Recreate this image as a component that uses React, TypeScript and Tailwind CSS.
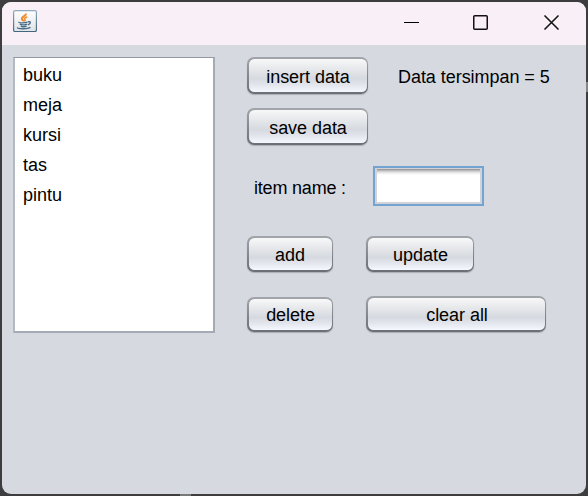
import type { ReactNode } from "react";

const items = ["buku", "meja", "kursi", "tas", "pintu"];

function Button({
  className,
  labelClass = "pt-px pl-px",
  children,
}: {
  className: string;
  labelClass?: string;
  children: ReactNode;
}) {
  return (
    <button
      className={`rounded-[7px] bg-linear-to-b from-[#a2a5aa] to-[#6b6e75] p-[1.5px] pb-[2px] shadow-[0_1px_1px_rgba(90,95,105,0.35)] ${className}`}
    >
      <span
        className={`flex h-full w-full items-center justify-center rounded-[5.5px] bg-[linear-gradient(to_bottom,#f8f8f9_0%,#e6e8eb_30%,#d6d9df_60%,#e2e5ec_78%,#f6f8ff_100%)] tracking-[-0.05px] whitespace-nowrap ${labelClass}`}
      >
        {children}
      </span>
    </button>
  );
}

function JavaIcon() {
  return (
    <svg width="24" height="24" viewBox="0 0 24 24" fill="none">
      <defs>
        <linearGradient id="tile" x1="0" y1="0" x2="0" y2="1">
          <stop offset="0" stopColor="#ffffff" />
          <stop offset="1" stopColor="#dfe3e6" />
        </linearGradient>
        <linearGradient id="edge" x1="0" y1="0" x2="0" y2="1">
          <stop offset="0" stopColor="#8fabbd" />
          <stop offset="1" stopColor="#45667f" />
        </linearGradient>
      </defs>
      <rect x="0.6" y="2.6" width="22.8" height="21" rx="1.5" fill="url(#tile)" stroke="url(#edge)" strokeWidth="1.2" />
      <path d="M12.9 5.5C13.6 8 8.2 8.6 8.8 10.9C9.1 12 10.8 12.4 11 13.4" stroke="#f08a28" strokeWidth="2" />
      <path d="M14.3 9C12 9.6 11 10.4 11.8 11.4C12.4 12.1 12.2 12.6 11.4 13.2" stroke="#f08a28" strokeWidth="1.5" />
      <path d="M6 13.9C5 15.2 12.5 15 14.5 14.1M7 16C7.4 17.2 12.6 17.1 14.2 16.2M7.8 18C8.8 19 12.2 18.9 13.6 18.2" stroke="#4a6d88" strokeWidth="1.4" />
      <path d="M14.8 13.9C18.2 12.8 18.1 15.8 14.9 16.8M4.6 19.4C3.2 21 15.1 21.3 17.4 19.3" stroke="#4a6d88" strokeWidth="1.4" />
    </svg>
  );
}

function TitleBar() {
  return (
    <header className="flex h-[43px] items-start justify-between bg-[#f9eff7] pt-[6px] pr-[26px] pl-[11px]">
      <JavaIcon />
      <svg className="mt-[7px]" width="156" height="15" viewBox="0 0 156 15" fill="none" stroke="#111" strokeWidth="1.5">
        <path d="M0 7.5H15" stroke="#000" strokeWidth="1" />
        <rect x="69.75" y="0.75" width="13.5" height="13.5" rx="1" />
        <path d="M140.5 0.5L154.5 14.5M154.5 0.5L140.5 14.5" />
      </svg>
    </header>
  );
}

export default function App() {
  return (
    <div className="relative h-[496px] w-[588px] overflow-hidden bg-[#3d3d3f] p-[2px] font-['Liberation_Sans',Arial,sans-serif] text-[18px] leading-5 text-black">
      <div className="absolute top-[82px] left-[586px] h-[10px] w-[2px] bg-[#858585]" />
      <div className="absolute top-[494px] left-[180px] h-[2px] w-[11px] bg-[#77787a]" />
      <div className="h-[492px] w-[584px] overflow-hidden rounded-[9px] bg-[#d6d9e0]">
        <TitleBar />
        <main className="flex gap-8 pt-3 pl-[11px]">
          <ul className="h-[276px] w-[202px] shrink-0 border-2 border-t border-[#a5abb5] border-t-[#9297a1] border-l-[#b5b9c1] bg-white pt-[2px] pl-2">
            {items.map((item) => (
              <li key={item} className="h-[30px] leading-[30px]">
                {item}
              </li>
            ))}
          </ul>
          <section className="flex w-[310px] flex-col">
            <div className="flex items-center">
              <Button className="h-[37px] w-[121px]" labelClass="pt-[3px] pl-px">
                insert data
              </Button>
              <span className="ml-[30px] pt-[3px] tracking-[-0.05px] whitespace-nowrap">Data tersimpan = 5</span>
            </div>
            <Button className="mt-[14px] h-[37px] w-[121px]" labelClass="pt-[3px] pl-px">
              save data
            </Button>
            <div className="mt-[21px] flex items-center">
              <label htmlFor="item-name" className="w-[126px] pt-[3px] pl-[7px] tracking-[-0.2px] whitespace-nowrap">
                item name :
              </label>
              <div className="h-10 w-[111px] border-2 border-[#73a4d1] bg-[#d1d3d7] p-[2px] pt-px">
                <input
                  id="item-name"
                  className="block h-full w-full bg-[linear-gradient(to_bottom,#8d8e91_0px,#c7c7c9_2px,#eeeeef_4px,#ffffff_6px)] outline-none"
                />
              </div>
            </div>
            <div className="mt-[30px] flex gap-[33px]">
              <Button className="h-[36px] w-[86px]" labelClass="pt-[2px]">
                add
              </Button>
              <Button className="h-[36px] w-[108px]" labelClass="pt-[2px] pl-px">
                update
              </Button>
            </div>
            <div className="mt-6 flex items-end gap-[33px]">
              <Button className="h-[35px] w-[86px]">delete</Button>
              <Button className="h-[36px] w-[180px]" labelClass="pt-[2px] pl-[2px]">
                clear all
              </Button>
            </div>
          </section>
        </main>
      </div>
    </div>
  );
}
